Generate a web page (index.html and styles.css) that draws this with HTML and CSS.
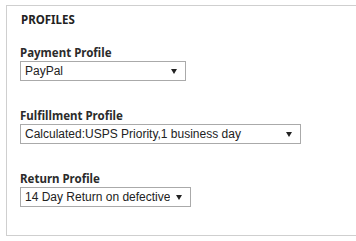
FILE: index.html
```html
<!DOCTYPE html>
<html>
<head>
    <title>Profiles</title>
    <link rel="stylesheet" href="styles.css">
</head>
<body>
    <div class="panel">
        <h3 class="panel-title">PROFILES</h3>

        <div class="field">
            <label for="payment-select">Payment Profile</label>
            <span class="select-wrap">
                <select id="payment-select" class="select-payment">
                    <option>PayPal</option>
                </select>
            </span>
        </div>

        <div class="field">
            <label for="fulfillment-select">Fulfillment Profile</label>
            <span class="select-wrap">
                <select id="fulfillment-select" class="select-fulfillment">
                    <option>Calculated:USPS Priority,1 business day</option>
                </select>
            </span>
        </div>

        <div class="field">
            <label for="return-select">Return Profile</label>
            <span class="select-wrap">
                <select id="return-select" class="select-return">
                    <option>14 Day Return on defective</option>
                </select>
            </span>
        </div>
    </div>
</body>
</html>
```

FILE: styles.css
```css
body {
    margin: 0;
    background: #fff;
    overflow: hidden;
    font-family: "Noto Sans", sans-serif;
}

/* box runs off the right edge, so no right border is drawn */
.panel {
    margin: 5px 0 0 6px;
    padding: 6px 0 28px 14px;
    border: 1px solid #cfcfcf;
    border-right: none;
    display: flex;
    flex-direction: column;
    align-items: flex-start;
    gap: 28px;
}

.panel-title {
    margin: 0 0 -10px;
    font-size: 11.5px;
    line-height: 16px;
    font-weight: 700;
    color: #222;
}

.field {
    display: flex;
    flex-direction: column;
    align-items: flex-start;
    gap: 1px;
}

label {
    font-size: 11.5px;
    line-height: 14px;
    font-weight: 700;
    color: #2b2b2b;
    margin-left: -1px;
}

.select-wrap {
    position: relative;
    display: inline-block;
    margin-left: -1px;
}

.select-wrap::after {
    content: "";
    position: absolute;
    right: 9px;
    top: 8px;
    border-left: 3px solid transparent;
    border-right: 3px solid transparent;
    border-top: 5px solid #222;
    pointer-events: none;
}

select {
    appearance: none;
    -webkit-appearance: none;
    display: block;
    height: 20px;
    margin: 0;
    padding: 0 20px 0 4px;
    border: 1px solid #aaa;
    border-radius: 0;
    background: #fff;
    font-family: "Liberation Sans", Arial, sans-serif;
    font-size: 12px;
    color: #222;
}

.select-payment {
    width: 166px;
}

.select-fulfillment {
    width: 281px;
}

.select-return {
    width: 171px;
}
```
